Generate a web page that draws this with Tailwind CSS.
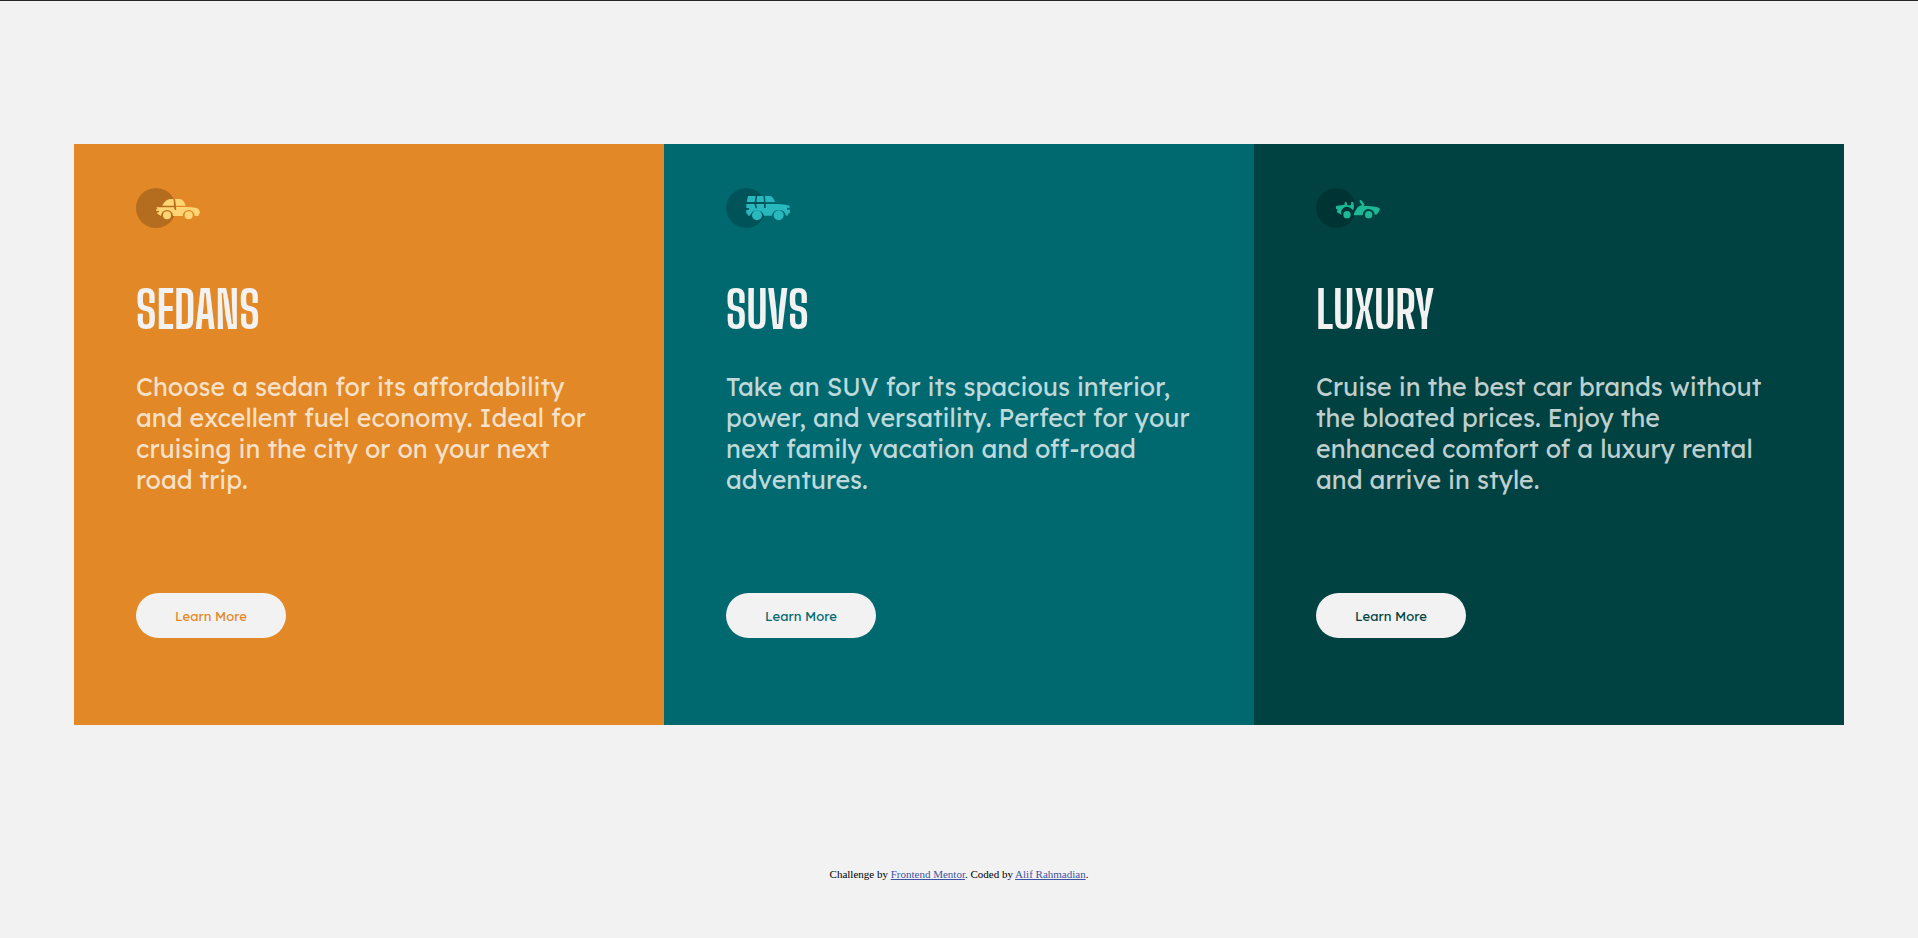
<!DOCTYPE html>
<html lang="en">
<head>
<meta charset="utf-8">
<meta name="viewport" content="width=device-width, initial-scale=1">
<title>3-column preview card</title>
<script src="https://cdn.jsdelivr.net/npm/@tailwindcss/browser@4"></script>
</head>
<body class="flex min-h-screen flex-col border-t border-[#29252a] bg-[#f2f2f2]">
<main class="mx-5 mt-[143px] grid grid-cols-1 font-['Lexend_Deca',Inter,sans-serif] md:mx-[74px] md:grid-cols-3">
  <section class="flex flex-col items-start bg-[#e28826] px-[62px] pt-11 pb-[87px]">
    <svg class="h-10 w-16" viewBox="0 0 192 120" aria-hidden="true">
      <circle cx="60" cy="60" r="60" fill="#000" fill-opacity=".2"/>
      <g fill="#ffd473">
        <path d="M79 53Q88 33 104 33H112Q114 42 114 53Z"/>
        <path d="M117 33H131Q143 34 149 53H120Q120 43 117 33Z"/>
        <path d="M61 58H114Q115 64 117 66H121Q121 61 120 57H151Q185 57 189 65L192 73L187 84H176A18 18 0 1 0 140 84H111A18 18 0 1 0 75 84L64 77V73H69V68H60V64H65Z"/>
        <circle cx="93" cy="82" r="12"/><circle cx="158" cy="82" r="12"/>
      </g>
    </svg>
    <h1 class="mt-[51px] font-['Big_Shoulders_Display','Liberation_Sans_Narrow',sans-serif] text-[50px] leading-[62px] font-bold text-[#f2f2f2]">SEDANS</h1>
    <p class="mt-[30px] text-[25px] leading-[31px] text-white/75">Choose a sedan for its affordability<br>and excellent fuel economy. Ideal for<br>cruising in the city or on your next<br>road trip.</p>
    <button type="button" class="mt-[98px] h-[45px] w-[150px] rounded-full bg-[#f2f2f2] pt-0.5 text-[13px] text-[#e28826]">Learn More</button>
  </section>
  <section class="flex flex-col items-start bg-[#006970] px-[62px] pt-11 pb-[87px]">
    <svg class="h-10 w-16" viewBox="0 0 192 120" aria-hidden="true">
      <circle cx="60" cy="60" r="60" fill="#000" fill-opacity=".2"/>
      <g fill="#29b8be">
        <path d="M66 24H89L86 42H62Z"/>
        <path d="M94 24H112L114 42H91Z"/>
        <path d="M117 24H133Q141 25 147 42H119Z"/>
        <path d="M61 48H86Q86 58 90 61H94Q91 58 91 48H114V60H119V48H151Q184 49 191 54V59H183V65H192V76H188L184 83H180A22 22 0 0 0 137 83H114A22 22 0 0 0 72 83H68L61 76V65H69V60H61Z"/>
        <circle cx="93" cy="82" r="15"/><circle cx="158" cy="82" r="15"/>
      </g>
    </svg>
    <h1 class="mt-[51px] font-['Big_Shoulders_Display','Liberation_Sans_Narrow',sans-serif] text-[50px] leading-[62px] font-bold text-[#f2f2f2]">SUVS</h1>
    <p class="mt-[30px] text-[25px] leading-[31px] text-white/75">Take an SUV for its spacious interior,<br>power, and versatility. Perfect for your<br>next family vacation and off-road<br>adventures.</p>
    <button type="button" class="mt-[98px] h-[45px] w-[150px] rounded-full bg-[#f2f2f2] pt-0.5 text-[13px] text-[#006970]">Learn More</button>
  </section>
  <section class="flex flex-col items-start bg-[#004241] px-[62px] pt-11 pb-[87px]">
    <svg class="h-10 w-16" viewBox="0 0 192 120" aria-hidden="true">
      <circle cx="60" cy="60" r="60" fill="#000" fill-opacity=".2"/>
      <g fill="#1db894">
        <path d="M60 54L86 50Q85 41 89 41Q93 42 94 52H104Q107 48 105 43Q108 40 112 43Q115 54 113 64L109 66A18 18 0 0 0 76 80L62 72L65 65L60 62Z"/>
        <path d="M131 37Q135 35 138 39L146 50L142 54H151Q184 55 192 62Q191 69 183 79L176 80A18 18 0 0 0 140 82H113Q117 65 129 55L138 51L131 42Z"/>
        <circle cx="93" cy="80" r="11"/><circle cx="158" cy="80" r="11"/>
      </g>
    </svg>
    <h1 class="mt-[51px] font-['Big_Shoulders_Display','Liberation_Sans_Narrow',sans-serif] text-[50px] leading-[62px] font-bold text-[#f2f2f2]">LUXURY</h1>
    <p class="mt-[30px] text-[25px] leading-[31px] text-white/75">Cruise in the best car brands without<br>the bloated prices. Enjoy the<br>enhanced comfort of a luxury rental<br>and arrive in style.</p>
    <button type="button" class="mt-[98px] h-[45px] w-[150px] rounded-full bg-[#f2f2f2] pt-0.5 text-[13px] text-[#004241]">Learn More</button>
  </section>
</main>
<footer class="mt-[143px] pb-10 text-center font-['Liberation_Serif',serif] text-[11px] leading-3 text-black">Challenge by <a href="#" class="text-[#3e52a3] underline">Frontend Mentor</a>. Coded by <a href="#" class="text-[#3e52a3] underline">Alif Rahmadian</a>.</footer>
</body>
</html>
